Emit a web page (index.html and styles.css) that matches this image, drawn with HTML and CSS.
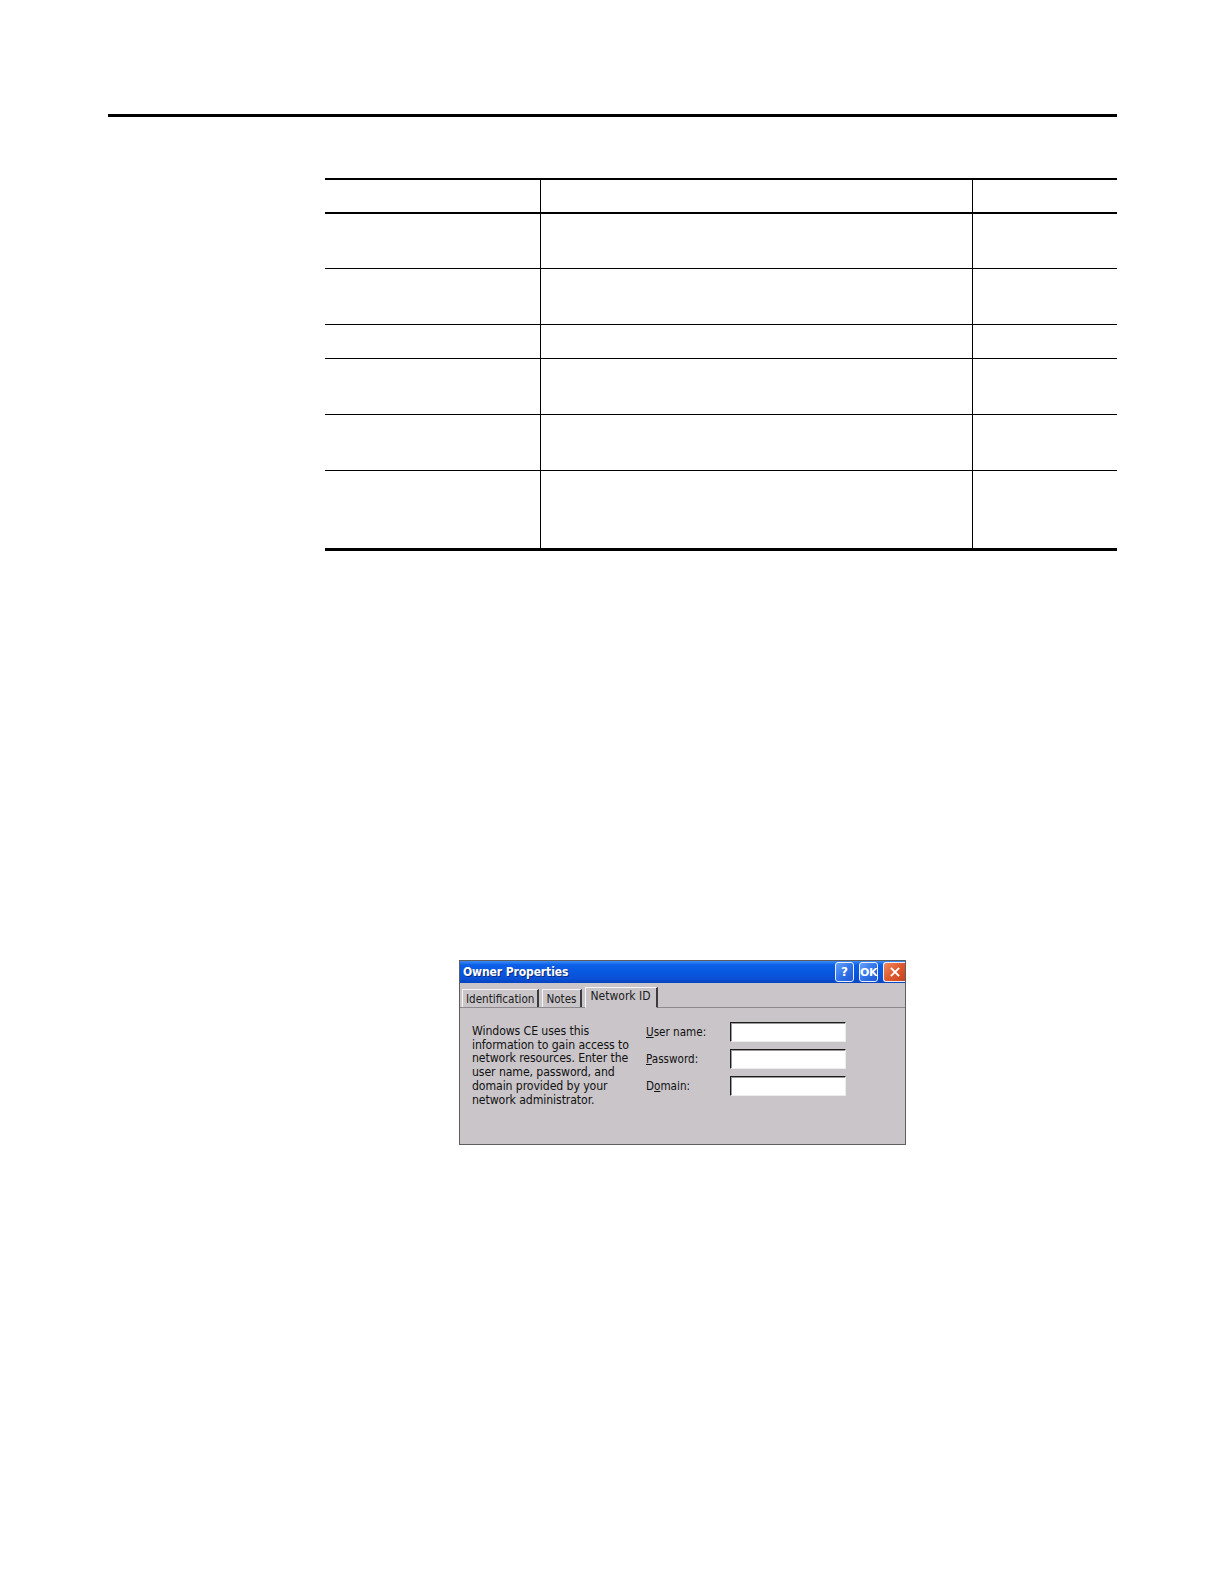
FILE: index.html
```html
<!DOCTYPE html>
<html lang="en">
<head>
<meta charset="utf-8">
<title>Owner Properties</title>
<link rel="stylesheet" href="styles.css">
</head>
<body>
<div class="page">
  <div class="rule"></div>

  <div class="tbl">
    <div class="row head"><div class="cell"></div><div class="cell"></div><div class="cell"></div></div>
    <div class="row r1"><div class="cell"></div><div class="cell"></div><div class="cell"></div></div>
    <div class="row r2"><div class="cell"></div><div class="cell"></div><div class="cell"></div></div>
    <div class="row r3"><div class="cell"></div><div class="cell"></div><div class="cell"></div></div>
    <div class="row r4"><div class="cell"></div><div class="cell"></div><div class="cell"></div></div>
    <div class="row r5"><div class="cell"></div><div class="cell"></div><div class="cell"></div></div>
    <div class="row r6"><div class="cell"></div><div class="cell"></div><div class="cell"></div></div>
  </div>

  <div class="dialog">
    <div class="titlebar">
      <span class="title">Owner Properties</span>
      <div class="tbtns">
        <span class="tbtn help">?</span>
        <span class="tbtn ok">OK</span>
        <span class="tbtn close">
          <svg viewBox="0 0 10 10" width="10" height="10"><path d="M1.5 1.5 L8.5 8.5 M8.5 1.5 L1.5 8.5" stroke="#fff" stroke-width="1.8" stroke-linecap="square"/></svg>
        </span>
      </div>
    </div>
    <div class="tabs">
      <span class="tab">Identification</span>
      <span class="tab">Notes</span>
      <span class="tab active">Network ID</span>
    </div>
    <div class="content">
      <p class="info">Windows CE uses this<br>information to gain access to<br>network resources. Enter the<br>user name, password, and<br>domain provided by your<br>network administrator.</p>
      <div class="form">
        <label class="lbl"><u>U</u>ser name:</label><span class="field"></span>
        <label class="lbl"><u>P</u>assword:</label><span class="field"></span>
        <label class="lbl">D<u>o</u>main:</label><span class="field"></span>
      </div>
    </div>
  </div>
</div>
</body>
</html>
```

FILE: styles.css
```css
html, body {
  margin: 0;
  padding: 0;
  background: #ffffff;
}

.page {
  width: 1224px;
  min-height: 1584px;
  overflow: hidden;
}

.rule {
  margin: 114px 0 0 108px;
  width: 1009px;
  height: 3px;
  background: #000;
}

.tbl {
  margin: 61px 0 0 325px;
  width: 792px;
  border-top: 2px solid #000;
  border-bottom: 3px solid #000;
}

.row {
  display: grid;
  grid-template-columns: 215px 432px 145px;
  border-bottom: 1px solid #000;
}

.row .cell + .cell {
  border-left: 1px solid #000;
}

.row.head { height: 32px; border-bottom-width: 2px; }
.row.r1 { height: 54px; }
.row.r2 { height: 55px; }
.row.r3 { height: 33px; }
.row.r4 { height: 55px; }
.row.r5 { height: 55px; }
.row.r6 { height: 77px; border-bottom: none; }

/* Dialog */
.dialog {
  box-sizing: border-box;
  margin: 409px 0 0 459px;
  width: 447px;
  height: 185px;
  border: 1px solid #5e5e5e;
  background: #c9c5c9;
  font-family: "DejaVu Sans Condensed", "DejaVu Sans", sans-serif;
  font-size: 11.6px;
  color: #111;
}

.titlebar {
  height: 22px;
  display: flex;
  align-items: center;
  justify-content: space-between;
  padding: 0 0 0 3px;
  background: linear-gradient(#3a8cf8 0%, #0b5fe6 18%, #0857e0 55%, #0a50d6 80%, #0644c0 100%);
}

.title {
  color: #fff;
  font-weight: bold;
  font-size: 12px;
  letter-spacing: -0.1px;
  text-shadow: 1px 1px 0 #0b2a7a;
}

.tbtns {
  display: flex;
  gap: 5px;
  align-self: flex-start;
  margin-top: 1px;
}

.tbtn {
  box-sizing: border-box;
  width: 19px;
  height: 20px;
  display: flex;
  align-items: center;
  justify-content: center;
  border: 1px solid #e8eefc;
  border-radius: 3px;
  color: #fff;
  font-family: "DejaVu Sans", sans-serif;
  font-weight: bold;
  font-size: 12px;
  background: linear-gradient(135deg, #6aa2f7 0%, #3274ea 50%, #1f58cf 100%);
}

.tbtn.ok {
  font-size: 11px;
  letter-spacing: -0.5px;
}

.tbtn.close {
  width: 22px;
  border-right: none;
  border-radius: 3px 0 0 3px;
  background: linear-gradient(135deg, #f08a5e 0%, #e05a30 50%, #c8421c 100%);
}

.tabs {
  height: 24px;
  display: flex;
  align-items: flex-end;
  gap: 3px;
  padding-left: 2px;
  border-bottom: 1px solid #8c8a8c;
}

.tab {
  box-sizing: border-box;
  height: 18px;
  padding: 0 3px;
  display: flex;
  align-items: center;
  border-top: 1px solid #f6f6f6;
  border-left: 1px solid #f6f6f6;
  border-right: 2px solid #3c3c3c;
  color: #202020;
}

.tab.active {
  height: 21px;
  padding: 1px 5px 0 5px;
  align-items: flex-start;
  margin-bottom: -1px;
  font-size: 12px;
  border-bottom: 1px solid #c9c5c9;
}

.content {
  display: flex;
  align-items: flex-start;
  padding: 14px 0 0 12px;
}

.info {
  margin: 3px 0 0 0;
  width: 174px;
  font-size: 12.2px;
  line-height: 13.7px;
  letter-spacing: -0.1px;
}

.form {
  display: grid;
  grid-template-columns: 84px 116px;
  grid-auto-rows: 20px;
  row-gap: 7px;
  align-items: center;
}

.lbl u {
  text-decoration-thickness: 1px;
  text-underline-offset: 1px;
}

.field {
  box-sizing: border-box;
  height: 20px;
  background: #fff;
  border-style: solid;
  border-width: 1px;
  border-color: #1c1c1c #ececec #ececec #1c1c1c;
  box-shadow: inset 1px 1px 0 #9a9a9a;
}
```
